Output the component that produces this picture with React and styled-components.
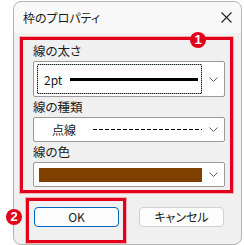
import React from 'react';
import styled, { createGlobalStyle } from 'styled-components';

const GlobalStyle = createGlobalStyle`
  html, body {
    margin: 0;
    padding: 0;
    background: #fff;
  }
  body {
    font-family: "Noto Sans CJK JP", "Noto Sans", sans-serif;
    font-feature-settings: 'palt';
    color: #1a1a1a;
  }
`;

const Page = styled.div`
  width: 244px;
  height: 245px;
  padding: 1px 0 0 13px;
  box-sizing: border-box;
  overflow: hidden;
`;

const Dialog = styled.div`
  width: 229px;
  height: 244px;
  box-sizing: border-box;
  border: 1px solid #b4b4b4;
  border-radius: 8px;
  background: #f0f0f0;
  display: flex;
  flex-direction: column;
`;

const TitleBar = styled.div`
  height: 31px;
  display: flex;
  align-items: center;
  justify-content: space-between;
  padding: 0 9px 0 9px;
  background: #f9f9f9;
  border-radius: 8px 8px 0 0;
  font-size: 12px;
`;

const Body = styled.div`
  display: flex;
  flex-direction: column;
  padding: 4px 0 0 6px;
`;

const Callout = styled.div`
  position: relative;
  border: 3px solid #e3001b;
  box-shadow: 0 0 0 1px #f6b0b4;
  box-sizing: border-box;
  width: ${p => p.w}px;
  padding: ${p => p.pad};
  display: flex;
  flex-direction: ${p => (p.row ? 'row' : 'column')};
`;

const Badge = styled.span`
  position: absolute;
  left: ${p => p.x}px;
  top: ${p => p.y}px;
  width: 16px;
  height: 16px;
  border-radius: 50%;
  background: #e3001b;
  color: #fff;
  font-family: "Liberation Sans", Arial, sans-serif;
  font-weight: 700;
  font-size: 13px;
  line-height: 16px;
  text-align: center;
`;

const Label = styled.div`
  height: 20px;
  line-height: 20px;
  font-size: 12.5px;
`;

const Combo = styled.div`
  width: 192px;
  height: ${p => p.h}px;
  box-sizing: border-box;
  background: #fff;
  border: 1px solid #9a9a9a;
  border-radius: 2px;
  display: flex;
  align-items: center;
  padding: 0 0 0 ${p => p.inset}px;
`;

const Focus = styled.div`
  flex: 1;
  align-self: stretch;
  margin: 2px 0;
  border: 1px solid #222;
  outline: 1px dotted #ff9a00;
  outline-offset: -1px;
  display: flex;
  align-items: center;
  padding: 0 3px 0 6px;
`;

const Value = styled.div`
  flex: 1;
  display: flex;
  align-items: center;
  gap: ${p => p.gap}px;
  font-size: 12px;
  padding-left: ${p => p.indent}px;
`;

const SolidLine = styled.span`
  flex: 1;
  height: 3px;
  background: #000;
`;

const DashLine = styled.span`
  flex: 1;
  height: 1px;
  background: repeating-linear-gradient(90deg, #000 0 4px, transparent 4px 6px);
`;

const Swatch = styled.span`
  flex: 1;
  height: 14px;
  background: #804000;
`;

const Arrow = styled.div`
  width: 22px;
  display: flex;
  justify-content: center;
`;

const ButtonRow = styled.div`
  display: flex;
  align-items: flex-start;
  gap: 13px;
  padding: 5px 0 0 6px;
`;

const Button = styled.button`
  width: 85px;
  height: 20px;
  margin-top: ${p => p.drop || 0}px;
  box-sizing: border-box;
  background: #fdfdfd;
  border: 1px solid ${p => (p.primary ? '#0067c0' : '#d0d0d0')};
  border-radius: 4px;
  font-family: "Noto Sans CJK JP", sans-serif;
  font-feature-settings: 'palt';
  font-size: 12px;
  line-height: 16px;
  padding: 0;
  color: #1a1a1a;
`;

const Chevron = () => (
  <svg width="9" height="5" viewBox="0 0 9 5">
    <path d="M0.5 0.5 L4.5 4.5 L8.5 0.5" fill="none" stroke="#606060" strokeWidth="1" />
  </svg>
);

const Close = () => (
  <svg width="11" height="11" viewBox="0 0 11 11">
    <path d="M0.5 0.5 L10.5 10.5 M10.5 0.5 L0.5 10.5" stroke="#222" strokeWidth="1.1" />
  </svg>
);

export default function App() {
  return (
    <Page>
      <GlobalStyle />
      <Dialog>
        <TitleBar>
          <span>枠のプロパティ</span>
          <Close />
        </TitleBar>
        <Body>
          <Callout w={213} pad="1px 0 3px 10px">
            <Badge x={167} y={-8}>1</Badge>
            <Label>線の太さ</Label>
            <Combo h={36} inset={3}>
              <Focus>
                <Value gap={8}>
                  <span>2pt</span>
                  <SolidLine />
                </Value>
              </Focus>
              <Arrow><Chevron /></Arrow>
            </Combo>
            <Label>線の種類</Label>
            <Combo h={25} inset={5}>
              <Value gap={17} indent={13}>
                <span>点線</span>
                <DashLine />
              </Value>
              <Arrow><Chevron /></Arrow>
            </Combo>
            <Label>線の色</Label>
            <Combo h={25} inset={5}>
              <Value gap={0} indent={0}>
                <Swatch />
              </Value>
              <Arrow><Chevron /></Arrow>
            </Combo>
          </Callout>
          <ButtonRow>
            <Callout w={100} pad="6px 4px 13px 5px" row>
              <Badge x={-23} y={8}>2</Badge>
              <Button primary>OK</Button>
            </Callout>
            <Button drop={9}>キャンセル</Button>
          </ButtonRow>
        </Body>
      </Dialog>
    </Page>
  );
}
